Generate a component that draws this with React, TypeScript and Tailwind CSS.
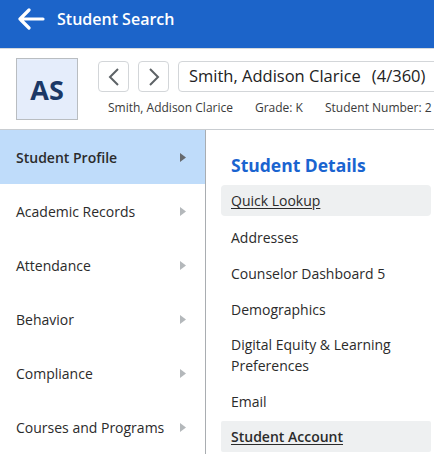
import React from "react";

const sideItems = [
  "Student Profile",
  "Academic Records",
  "Attendance",
  "Behavior",
  "Compliance",
  "Courses and Programs",
];

function Tri({ dark }: { dark?: boolean }) {
  return (
    <svg width="6" height="9" viewBox="0 0 6 9" className="shrink-0">
      <path d="M0 0 L6 4.5 L0 9 Z" fill={dark ? "#666a6e" : "#b4b8bb"} />
    </svg>
  );
}

export default function App() {
  return (
    <div
      className="w-[434px] h-[459px] overflow-hidden bg-white text-[#2b2b2b]"
      style={{ fontFamily: '"Open Sans", "Noto Sans", sans-serif' }}
    >
      {/* Header */}
      <div className="h-[49px] bg-[#1c64c9] border-b border-[#d5d9dd]">
        <div className="h-[38px] flex items-center">
          <svg width="28" height="22" viewBox="0 0 28 22" className="ml-[17px]">
            <path
              d="M26 11 H3 M12 2 L3 11 L12 20"
              stroke="white"
              strokeWidth="3.2"
              strokeLinecap="round"
              strokeLinejoin="round"
              fill="none"
            />
          </svg>
          <span className="ml-[12px] text-white font-semibold text-[16px]">Student Search</span>
        </div>
      </div>

      {/* Student banner */}
      <div className="h-[81px] flex border-b border-[#c9cdd1] pl-[16px] pt-[9px]">
        <div className="w-[62px] h-[62px] bg-[#e5edfb] border border-[#b9bdc1] flex items-center justify-center shrink-0">
          <span className="text-[27px] font-bold text-[#1b3866] leading-none">AS</span>
        </div>
        <div className="ml-[20px] flex flex-col min-w-0">
          <div className="flex items-center mt-[3px] gap-[9px]">
            <button className="w-[31px] h-[31px] border border-[#d3d6d9] rounded-[4px] flex items-center justify-center bg-white shrink-0">
              <svg width="12" height="18" viewBox="0 0 12 18">
                <path d="M10 1 L2 9 L10 17" stroke="#5d6266" strokeWidth="2" fill="none" />
              </svg>
            </button>
            <button className="w-[31px] h-[31px] border border-[#d3d6d9] rounded-[4px] flex items-center justify-center bg-white shrink-0">
              <svg width="12" height="18" viewBox="0 0 12 18">
                <path d="M2 1 L10 9 L2 17" stroke="#5d6266" strokeWidth="2" fill="none" />
              </svg>
            </button>
            <div className="h-[31px] w-[280px] shrink-0 border border-[#d3d6d9] rounded-[4px] flex items-center pl-[10px] whitespace-nowrap text-[16.5px] text-[#222]">
              Smith, Addison Clarice <span className="ml-[11px]">(4/360)</span>
            </div>
          </div>
          <div className="flex whitespace-nowrap text-[12px] text-[#3a3a3a] mt-[7px] ml-[10px]">
            <span>Smith, Addison Clarice</span>
            <span className="ml-[22px]">Grade: K</span>
            <span className="ml-[22px]">Student Number: 2</span>
          </div>
        </div>
      </div>

      {/* Body */}
      <div className="flex">
        <div className="w-[206px] shrink-0 border-r border-[#a9adb1]">
          {sideItems.map((s, i) => (
            <div
              key={s}
              className={`h-[54px] flex items-center justify-between pl-[16px] pr-[19px] text-[14px] ${
                i === 0 ? "bg-[#bfdcfa] font-semibold text-[#2b2b2b]" : "text-[#2b2b2b]"
              }`}
            >
              <span>{s}</span>
              <Tri dark={i === 0} />
            </div>
          ))}
        </div>
        <div className="flex-1 pl-[15px] pr-[3px]">
          <div className="text-[17.5px] font-bold text-[#1a64d0] pl-[10px] pt-[23px] pb-[8px] leading-[24px]">
            Student Details
          </div>
          <div className="flex flex-col text-[14px] text-[#2b2b2b]">
            <div className="h-[31px] bg-[#eef0f1] rounded-[4px] flex items-center pl-[10px] underline underline-offset-2">
              Quick Lookup
            </div>
            <div className="h-[36px] flex items-center pl-[10px] mt-[3px]">Addresses</div>
            <div className="h-[36px] flex items-center pl-[10px]">Counselor Dashboard 5</div>
            <div className="h-[36px] flex items-center pl-[10px]">Demographics</div>
            <div className="pl-[10px] pt-[7px] pb-[7px] leading-[21px]">
              Digital Equity &amp; Learning
              <br />
              Preferences
            </div>
            <div className="h-[36px] flex items-center pl-[10px]">Email</div>
            <div className="h-[31px] mt-[2px] bg-[#eef0f1] rounded-[2px] flex items-center pl-[10px] underline underline-offset-2 font-semibold">
              Student Account
            </div>
          </div>
        </div>
      </div>
    </div>
  );
}
